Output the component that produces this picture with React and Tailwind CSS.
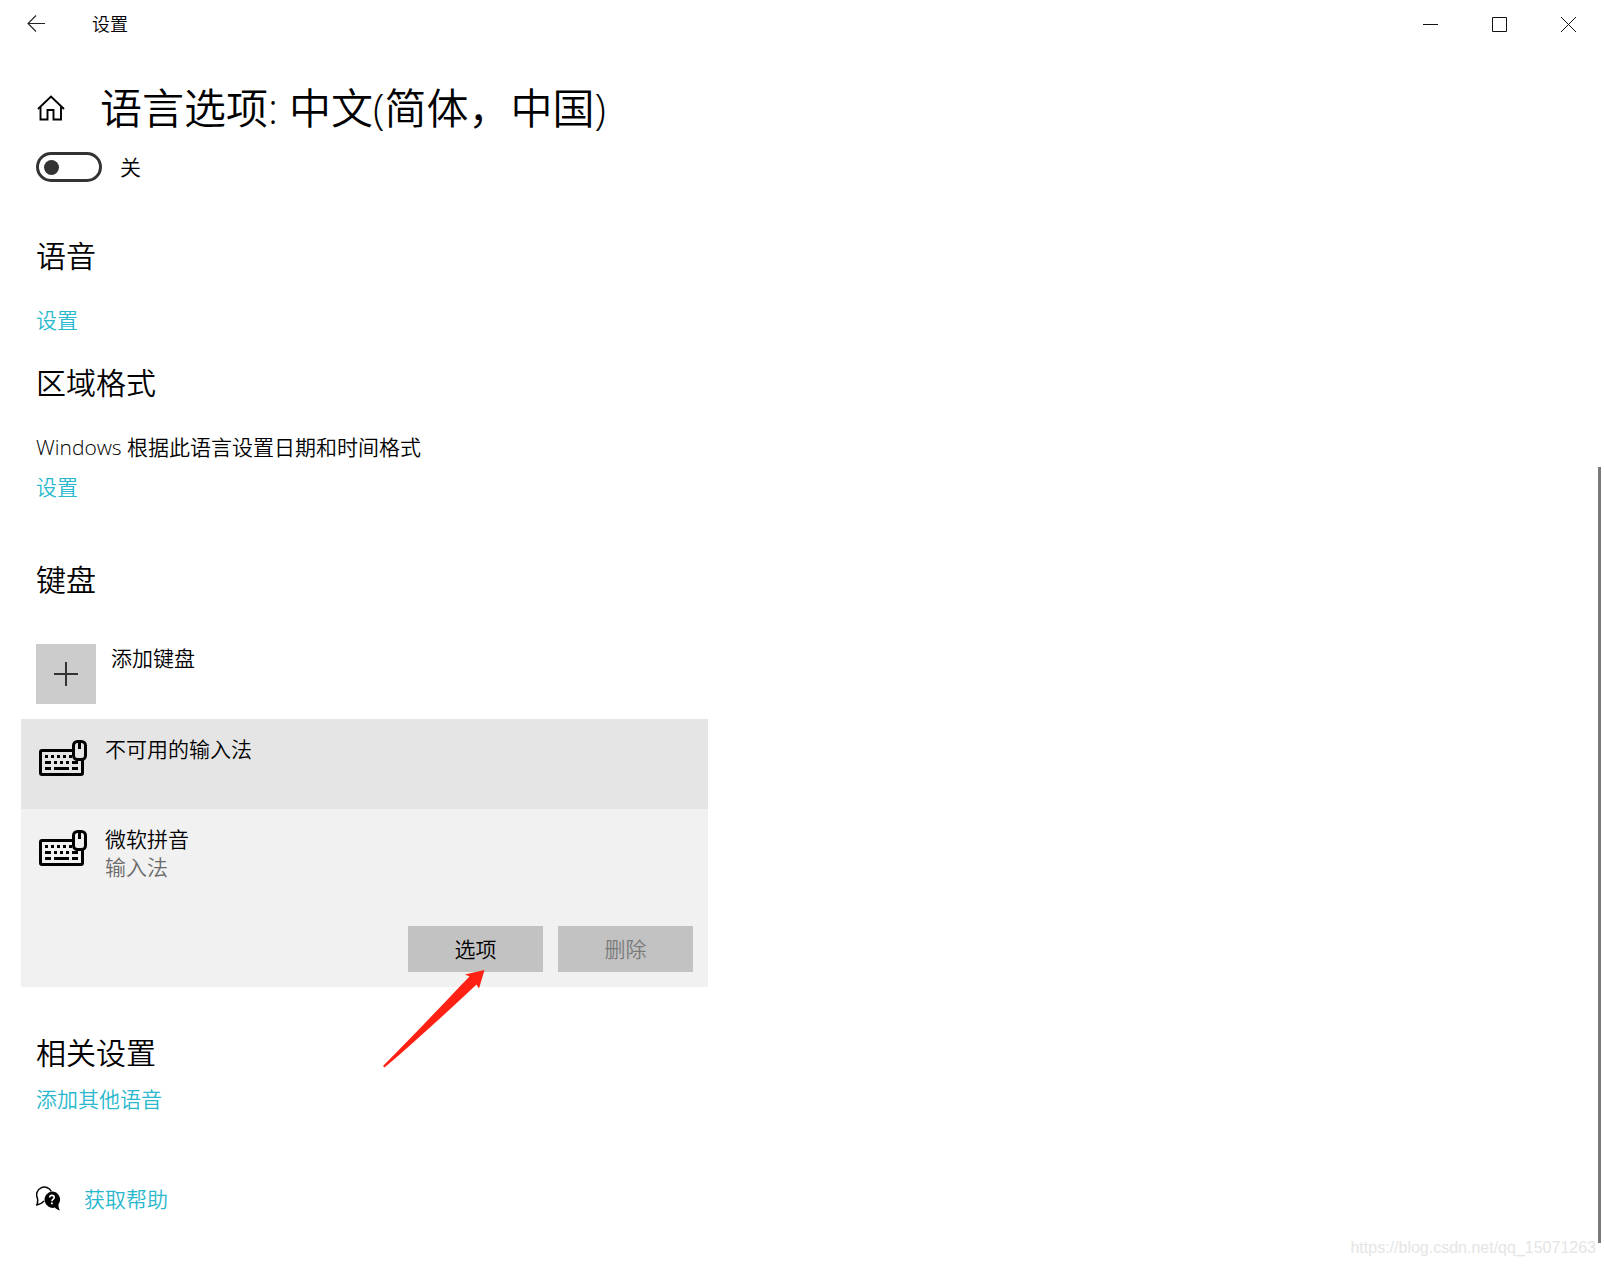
import React from "react";

function BackIcon() {
  return (
    <svg width="18" height="18" viewBox="0 0 18 18" fill="none" stroke="#222" strokeWidth="1.1">
      <path d="M18 8.5H1M9 0.5L1 8.5L9 16.5" />
    </svg>
  );
}

function HomeIcon() {
  return (
    <svg width="30" height="30" viewBox="-2 -4 30 30" fill="none" stroke="#000" strokeWidth="1.9">
      <path d="M0 14L13 1.5L26 14" />
      <path d="M2.5 12V24.5H9.5V15H15.5V24.5H23V12" />
    </svg>
  );
}

function KeyboardIcon({ surface }) {
  return (
    <svg className="shrink-0" width="48" height="36" viewBox="0 0 48 36" fill="none">
      <rect x="1.5" y="10.5" width="42" height="24" rx="1.5" stroke="#000" strokeWidth="3" />
      <g fill="#000">
        <path d="M6 15h3v3h-3zM12 15h3v3h-3zM18 15h3v3h-3zM24 15h3v3h-3zM30 15h3v3h-3z" />
        <path d="M6 21h6v3h-6zM15 21h3v3h-3zM21 21h3v3h-3zM27 21h3v3h-3zM33 21h6v3h-6z" />
        <path d="M6 27h6v3h-6zM15 27h15v3h-15zM33 27h6v3h-6z" />
      </g>
      <rect x="34.5" y="1.5" width="12" height="18" rx="4" fill={surface} stroke="#000" strokeWidth="3" />
      <path d="M40.5 1v8" stroke="#000" strokeWidth="3" />
    </svg>
  );
}

function HelpIcon() {
  return (
    <svg width="24" height="26" viewBox="0 -2 24 26" fill="none">
      <path
        d="M15.3 4.5A7.4 7.4 0 0 0 1.4 11.2C2 13.5 1.8 15.5 0.8 18C3 17.7 5.5 16.7 8.2 14"
        stroke="#000"
        strokeWidth="1.5"
      />
      <path
        d="M16 4.5A8 8 0 0 1 22.6 17C22.2 18.5 22.7 21.5 24 23.5C21.7 23 20 22 18.8 20.6A8.2 8.2 0 1 1 16 4.5Z"
        fill="#000"
      />
      <path d="M13.6 10.4C13.6 7.6 18.2 7.7 18.2 10.4C18.2 12.2 15.9 12.2 15.9 14.3" stroke="#fff" strokeWidth="1.6" />
      <path d="M15 15.5h1.8v1.8h-1.8z" fill="#fff" />
    </svg>
  );
}

function PointerArrow() {
  return (
    <svg
      className="pointer-events-none absolute top-[250px] left-[361px]"
      width="104"
      height="100"
      viewBox="0 0 104 100"
      fill="#ff2113"
      aria-hidden="true"
    >
      <path d="M102.5 1L83 5.5L87.5 7.5C60 36 30 68 1 97L2.5 98.500C34 72 65 43 94.5 15.5L97 19.5Z" />
    </svg>
  );
}

function SectionTitle({ children }) {
  return <h2 className="text-[30px] leading-10">{children}</h2>;
}

function TextLink({ children }) {
  return (
    <a href="#" className="text-[#29b8cd]">
      {children}
    </a>
  );
}

function TitleBar() {
  const button = "flex h-12 w-[69px] items-center justify-center";
  return (
    <header className="flex h-12 items-center pr-px">
      <button aria-label="返回" className="flex h-12 w-[72px] items-center justify-center">
        <BackIcon />
      </button>
      <span className="ml-5 grow text-lg">设置</span>
      <button aria-label="最小化" className={button}>
        <svg width="15" height="15" viewBox="0 0 15 15" stroke="#111"><path d="M0 7.5H15" /></svg>
      </button>
      <button aria-label="最大化" className={button}>
        <svg width="15" height="15" viewBox="0 0 15 15" stroke="#111" fill="none"><path d="M.5 .5H14.5V14.5H.5Z" /></svg>
      </button>
      <button aria-label="关闭" className={button}>
        <svg width="15" height="15" viewBox="0 0 15 15" stroke="#111"><path d="M0 0L15 15M15 0L0 15" /></svg>
      </button>
    </header>
  );
}

export default function App() {
  return (
    <div
      lang="zh-CN"
      className="relative min-h-screen bg-white font-['Open_Sans','Noto_Sans_CJK_SC',sans-serif] text-[21px] leading-7 font-[350] text-black"
    >
      <TitleBar />

      <main className="px-9 pt-[30px] pb-12">
        <div className="flex items-center gap-[34px]">
          <a href="#" aria-label="主页"><HomeIcon /></a>
          <h1 className="font-['Noto_Sans_CJK_SC',sans-serif] text-[42px] leading-14">
            语言选项<span className="font-['Open_Sans'] leading-none font-light">: </span>中文
            <span className="font-['Open_Sans'] leading-none font-light">(</span>简体，中国
            <span className="font-['Open_Sans'] leading-none font-light">)</span>
          </h1>
        </div>

        <label className="mt-[18px] flex h-[30px] w-fit items-center gap-[18px]">
          <input
            type="checkbox"
            role="switch"
            className="flex h-[30px] w-[66px] appearance-none items-center rounded-full border-3 border-[#333] px-[5px] before:size-[15px] before:rounded-full before:bg-[#333] checked:justify-end"
          />
          <span>关</span>
        </label>

        <section className="mt-[54px]">
          <SectionTitle>语音</SectionTitle>
          <p className="mt-[30px]"><TextLink>设置</TextLink></p>
        </section>

        <section className="mt-[29px]">
          <SectionTitle>区域格式</SectionTitle>
          <p className="mt-[30px]">Windows 根据此语言设置日期和时间格式</p>
          <p className="mt-3"><TextLink>设置</TextLink></p>
        </section>

        <section className="mt-[59px]">
          <SectionTitle>键盘</SectionTitle>
          <button className="mt-11 flex gap-[15px] text-left">
            <span className="flex size-[60px] items-center justify-center bg-[#ccc]">
              <svg width="24" height="24" viewBox="0 0 24 24" stroke="#333" strokeWidth="2"><path d="M12 0V24M0 12H24" /></svg>
            </span>
            <span>添加键盘</span>
          </button>

          <div className="relative -mx-[15px] mt-[15px] max-w-[687px]">
            <ul>
              <li className="flex h-[90px] gap-[18px] bg-[#e5e5e5] px-[18px] pt-4">
                <span className="pt-[5px]"><KeyboardIcon surface="#e5e5e5" /></span>
                <span>不可用的输入法</span>
              </li>
              <li className="bg-[#f1f1f1] pb-[15px]">
                <div className="flex gap-[18px] px-[18px] pt-4">
                  <span className="pt-[5px]"><KeyboardIcon surface="#f1f1f1" /></span>
                  <div>
                    <p>微软拼音</p>
                    <p className="text-[#6a6a6a]">输入法</p>
                  </div>
                </div>
                <div className="mt-[45px] flex justify-end gap-[15px] px-[15px]">
                  <button className="h-[46px] w-[135px] bg-[#c2c2c2]">选项</button>
                  <button disabled className="h-[46px] w-[135px] bg-[#c2c2c2] text-[#7a7a7a]">删除</button>
                </div>
              </li>
            </ul>
            <PointerArrow />
          </div>
        </section>

        <section className="mt-[46px]">
          <SectionTitle>相关设置</SectionTitle>
          <p className="mt-3"><TextLink>添加其他语音</TextLink></p>
        </section>

        <div className="mt-[72px] flex items-start gap-6">
          <HelpIcon />
          <TextLink>获取帮助</TextLink>
        </div>
      </main>

      <div className="absolute top-[467px] right-[3px] bottom-[23px] w-[3px] bg-[#7a7a7a]" />
      <p className="absolute right-2 bottom-[6px] font-['Liberation_Sans',sans-serif] text-base font-normal text-[#e5e5e5]">
        https://blog.csdn.net/qq_15071263
      </p>
    </div>
  );
}
